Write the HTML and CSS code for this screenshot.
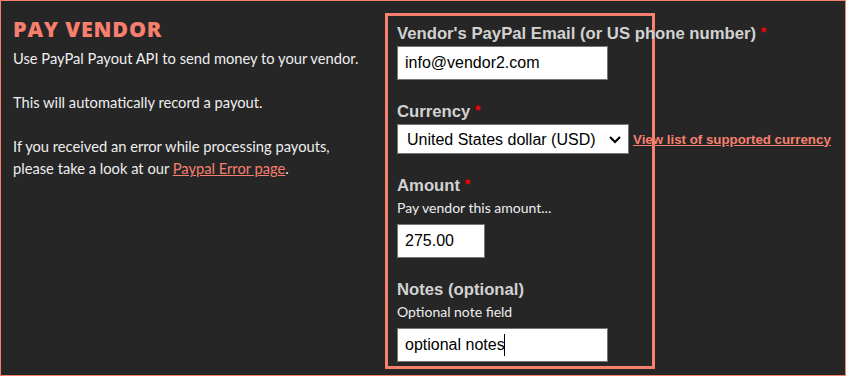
FILE: index.html
```html
<!DOCTYPE html>
<html lang="en">
<head>
    <meta charset="UTF-8">
    <meta name="viewport" content="width=device-width, initial-scale=1.0">
    <title>Pay Vendor</title>
    <link rel="stylesheet" href="styles.css">
</head>
<body>
    <div class="page">
        <div class="intro">
            <h1 class="title">PAY VENDOR</h1>
            <p class="intro-text">
                Use PayPal Payout API to send money to your vendor.<br><br>
                This will automatically record a payout.<br><br>
                If you received an error while processing payouts,<br>
                please take a look at our <a href="#" class="text-link">Paypal Error page</a>.
            </p>
        </div>

        <form class="payout-form">
            <div class="field">
                <label class="field-label" for="email">Vendor's PayPal Email (or US phone number) <span class="required">*</span></label>
                <input class="text-input" id="email" type="text" value="info@vendor2.com">
            </div>

            <div class="field">
                <label class="field-label" for="currency">Currency <span class="required">*</span></label>
                <div class="select-row">
                    <div class="select-wrap">
                        <select class="select-input" id="currency">
                            <option>United States dollar (USD)</option>
                        </select>
                        <svg class="chevron" width="14" height="9" viewBox="0 0 14 9">
                            <path d="M2 2 L7 7 L12 2" fill="none" stroke="#000" stroke-width="2.2"/>
                        </svg>
                    </div>
                    <a href="#" class="currency-link">View list of supported currency</a>
                </div>
            </div>

            <div class="field">
                <label class="field-label" for="amount">Amount <span class="required">*</span></label>
                <div class="field-hint">Pay vendor this amount...</div>
                <input class="text-input amount-input" id="amount" type="text" value="275.00">
            </div>

            <div class="field">
                <label class="field-label" for="notes">Notes (optional)</label>
                <div class="field-hint">Optional note field</div>
                <div class="input-wrap">
                    <input class="text-input" id="notes" type="text" value="optional notes">
                    <span class="caret"></span>
                </div>
            </div>
        </form>
    </div>
</body>
</html>
```

FILE: styles.css
```css
:root {
    --bg: #262626;
    --salmon: #f77f6e;
    --text: #eeeeee;
    --label: #d2d2d2;
}

* {
    box-sizing: border-box;
}

body {
    margin: 0;
    background-color: var(--bg);
    font-family: "Lato", "Liberation Sans", sans-serif;
}

.page {
    display: flex;
    height: 376px;
    border: 1px solid var(--salmon);
    overflow: hidden;
}

/* Lewa kolumna z opisem */
.intro {
    width: 384px;
    padding: 14px 0 0 12px;
    flex-shrink: 0;
}

.title {
    margin: 0;
    font-family: "Open Sans", sans-serif;
    font-weight: 800;
    font-size: 21.5px;
    letter-spacing: 0.8px;
    line-height: 28px;
    color: var(--salmon);
}

.intro-text {
    margin: 4px 0 0;
    font-size: 14.7px;
    line-height: 22px;
    color: var(--text);
}

.text-link {
    color: var(--salmon);
}

/* Formularz w ramce */
.payout-form {
    width: 270px;
    height: 356px;
    margin-top: 12px;
    padding: 9px 0 0 9px;
    border: 3px solid var(--salmon);
    flex-shrink: 0;
}

.field {
    display: flex;
    flex-direction: column;
    align-items: flex-start;
    margin-bottom: 23px;
}

.field-label {
    display: block;
    height: 18px;
    font-family: "Liberation Sans", Arial, sans-serif;
    font-weight: 700;
    font-size: 16.7px;
    line-height: 18px;
    color: var(--label);
    white-space: nowrap;
    margin-bottom: 3px;
}

.required {
    color: #ff0000;
    font-size: 14px;
    line-height: 0;
    vertical-align: 2px;
}

.field-hint {
    font-size: 14px;
    line-height: 18px;
    color: var(--text);
    margin: 1px 0 7px;
}

.text-input {
    width: 211px;
    height: 34px;
    padding: 0 7px;
    border: 1px solid #767676;
    border-radius: 0;
    background: #fff;
    font-family: "Liberation Sans", Arial, sans-serif;
    font-size: 16px;
    color: #000;
    outline: none;
}

.amount-input {
    width: 88px;
}

.input-wrap {
    position: relative;
}

/* Kursor tekstowy w polu notatek */
.caret {
    position: absolute;
    left: 107px;
    top: 6px;
    width: 1px;
    height: 22px;
    background: #000;
}

.select-row {
    display: flex;
    align-items: center;
    gap: 4px;
}

.select-wrap {
    position: relative;
}

.select-input {
    display: block;
    width: 232px;
    height: 30px;
    padding: 0 28px 0 9px;
    border: 1px solid #767676;
    border-radius: 0;
    background: #fff;
    font-family: "Liberation Sans", Arial, sans-serif;
    font-size: 16px;
    color: #000;
    appearance: none;
    -webkit-appearance: none;
}

.chevron {
    position: absolute;
    right: 7px;
    top: 11px;
    pointer-events: none;
}

.currency-link {
    font-family: "Liberation Sans", Arial, sans-serif;
    font-weight: 700;
    font-size: 13.3px;
    color: var(--salmon);
    white-space: nowrap;
}
```
